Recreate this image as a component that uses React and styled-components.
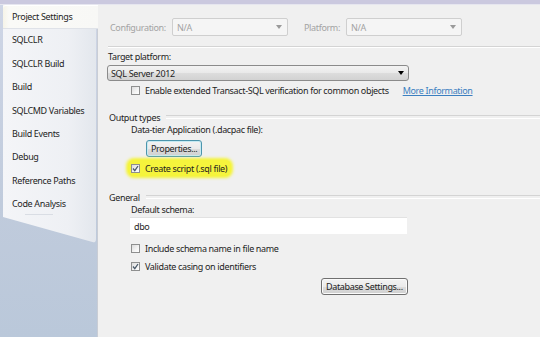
import React from "react";
import styled, { createGlobalStyle } from "styled-components";

const Global = createGlobalStyle`
  html, body { margin: 0; padding: 0; background: #f0f0f0; }
  body { font-family: "Noto Sans", "Open Sans", sans-serif; font-size: 9px; letter-spacing: -0.35px; color: #1e1e1e; }
  * { box-sizing: border-box; }
`;

const Window = styled.div`
  width: 540px;
  height: 337px;
  overflow: hidden;
  display: flex;
  flex-direction: column;
  background: #f0f0f0;
`;

const TopBar = styled.div`
  height: 5px;
  flex: none;
  background: #cbc9df;
  border-bottom: 1px solid #e6e6ef;
`;

const Body = styled.div`
  flex: 1;
  display: flex;
`;

const Sidebar = styled.div`
  width: 98px;
  flex: none;
  padding-left: 3px;
  background: linear-gradient(to bottom, #cfd6e6 0%, #c0cbdc 60%, #bac8da 100%);
`;

const Panel = styled.div`
  position: relative;
  width: 93px;
  height: 238px;
  display: flex;
  flex-direction: column;
  &::before {
    content: "";
    position: absolute;
    inset: 0;
    border-bottom-right-radius: 4px;
    background: linear-gradient(to right, #f4f5f8 0%, #eef0f4 70%, #e3e7ed 100%);
    clip-path: polygon(0 0, 100% 0, 100% 100%, 0 212px);
  }
`;

const Tab = styled.div`
  position: relative;
  z-index: 1;
  height: 23.4px;
  line-height: 23.4px;
  padding-left: 9px;
  white-space: nowrap;
  width: ${(p) => (p.$selected ? "95px" : "93px")};
  border-top-left-radius: ${(p) => (p.$selected ? "3px" : "0")};
  background: ${(p) =>
    p.$selected
      ? "linear-gradient(to right, #f6f4e8 0px, #fafaf7 6px, #f8f8f6 100%)"
      : "transparent"};
  box-shadow: ${(p) => (p.$selected ? "inset 0 1px 0 #ffffff, 0 1px 0 #dfe2e8" : "none")};
`;

const TabRule = styled.div`
  position: relative;
  z-index: 1;
  margin: -2px 0 0 22px;
  width: 28px;
  height: 1px;
  background: #d9dde4;
`;

const Content = styled.div`
  position: relative;
  flex: 1;
  padding: 13px 0 0 10px;
  display: flex;
  flex-direction: column;
  &::before {
    content: "";
    position: absolute;
    left: -1px;
    top: 23px;
    bottom: 0;
    width: 1px;
    background: #c9cdd5;
  }
`;

const TopRow = styled.div`
  display: flex;
  align-items: center;
  height: 18px;
  padding-left: 2px;
`;

const Muted = styled.span`
  color: #a3a3a3;
  width: ${(p) => p.$w}px;
  flex: none;
`;

const Disabled = styled.div`
  width: 116px;
  height: 18px;
  flex: none;
  border: 1px solid #cfcfcf;
  border-radius: 2px;
  background: #f5f5f5;
  color: #a3a3a3;
  display: flex;
  align-items: center;
  justify-content: space-between;
  padding: 0 5px 0 4px;
  margin-right: ${(p) => p.$mr || 0}px;
`;

const Separator = styled.div`
  margin-top: 10px;
  height: 2px;
  border-top: 1px solid #d4d4d4;
  border-bottom: 1px solid #ffffff;
`;

const Label = styled.div`
  height: 12px;
  line-height: 12px;
  margin-top: ${(p) => p.$mt || 0}px;
  margin-left: ${(p) => p.$ml || 0}px;
  white-space: nowrap;
`;

const Select = styled.div`
  margin: 2px 0 0 -1px;
  width: 302px;
  height: 16px;
  border: 1px solid #8b8b8b;
  border-radius: 3px;
  background: linear-gradient(to bottom, #f3f3f3 0%, #e9e9e9 50%, #dddddd 51%, #d2d2d2 100%);
  display: flex;
  align-items: center;
  justify-content: space-between;
  padding: 0 4px 0 3px;
`;

const Row = styled.div`
  display: flex;
  align-items: center;
  height: 12px;
  margin-top: ${(p) => p.$mt || 0}px;
  margin-left: ${(p) => p.$ml ?? 23}px;
  white-space: nowrap;
`;

const Box = styled.span`
  width: 9px;
  height: 9px;
  flex: none;
  margin-right: 5px;
  border: 1px solid #8e8f8f;
  background: linear-gradient(135deg, #dcdcdc 0%, #f4f4f4 60%, #ffffff 100%);
  display: flex;
  align-items: center;
  justify-content: center;
`;

const Link = styled.span`
  margin-left: 14px;
  color: #3b7fc0;
  text-decoration: underline;
`;

const Highlight = styled.div`
  align-self: flex-start;
  margin: 3px 0 0 20px;
  padding: 2px 4px 2px 3px;
  background: #f5f43c;
  border-radius: 6px;
  box-shadow: 0 0 3px 2px #f5f43c;
`;

const GroupHead = styled.div`
  display: flex;
  align-items: center;
  height: 12px;
  margin-top: ${(p) => p.$mt}px;
  margin-left: 1px;
  &::after {
    content: "";
    flex: 1;
    margin-left: 6px;
    height: 2px;
    border-top: 1px solid #d4d4d4;
    border-bottom: 1px solid #ffffff;
  }
`;

const Button = styled.div`
  align-self: flex-start;
  margin-top: ${(p) => p.$mt}px;
  margin-left: ${(p) => p.$ml}px;
  height: 17px;
  padding: 0 ${(p) => p.$px}px;
  border: 1px solid ${(p) => (p.$focus ? "#4c95ad" : "#707070")};
  border-radius: 3px;
  background: linear-gradient(to bottom, #f3f3f3 0%, #ebebeb 50%, #dddddd 51%, #d0d0d0 100%);
  box-shadow: inset 0 0 0 1px ${(p) => (p.$focus ? "#c6eaf2" : "#fbfbfb")};
  display: flex;
  align-items: center;
  white-space: nowrap;
`;

const Input = styled.div`
  margin: 1px 0 0 22px;
  width: 277px;
  height: 17px;
  background: #ffffff;
  border-top: 1px solid #e2e2e2;
  display: flex;
  align-items: center;
  padding-left: 4px;
`;

const Arrow = ({ color }) => (
  <svg width="6" height="4" viewBox="0 0 6 4">
    <path d="M0 0H6L3 4Z" fill={color} />
  </svg>
);

const Check = ({ checked }) => (
  <Box>
    {checked && (
      <svg width="7" height="7" viewBox="0 0 7 7">
        <path d="M1 3.5L2.8 5.6L6 1" fill="none" stroke="#4a5a6a" strokeWidth="1.3" />
      </svg>
    )}
  </Box>
);

const tabs = [
  "Project Settings",
  "SQLCLR",
  "SQLCLR Build",
  "Build",
  "SQLCMD Variables",
  "Build Events",
  "Debug",
  "Reference Paths",
  "Code Analysis",
];

export default function App() {
  return (
    <Window>
      <Global />
      <TopBar />
      <Body>
        <Sidebar>
          <Panel>
            {tabs.map((t, i) => (
              <Tab key={t} $selected={i === 0}>
                {t}
              </Tab>
            ))}
            <TabRule />
          </Panel>
        </Sidebar>
        <Content>
          <TopRow>
            <Muted $w={62}>Configuration:</Muted>
            <Disabled $mr={16}>
              N/A <Arrow color="#9a9a9a" />
            </Disabled>
            <Muted $w={42}>Platform:</Muted>
            <Disabled>
              N/A <Arrow color="#9a9a9a" />
            </Disabled>
          </TopRow>
          <Separator />
          <Label $mt={3}>Target platform:</Label>
          <Select>
            SQL Server 2012 <Arrow color="#000" />
          </Select>
          <Row $mt={3}>
            <Check />
            Enable extended Transact-SQL verification for common objects
            <Link>More Information</Link>
          </Row>
          <GroupHead $mt={15}>Output types</GroupHead>
          <Label $mt={1} $ml={23}>Data-tier Application (.dacpac file):</Label>
          <Button $mt={4} $ml={38} $px={4} $focus>
            Properties...
          </Button>
          <Highlight>
            <Row $ml={0}>
              <Check checked />
              Create script (.sql file)
            </Row>
          </Highlight>
          <GroupHead $mt={15}>General</GroupHead>
          <Label $mt={1} $ml={23}>Default schema:</Label>
          <Input>dbo</Input>
          <Row $mt={8}>
            <Check />
            Include schema name in file name
          </Row>
          <Row $mt={6}>
            <Check checked />
            Validate casing on identifiers
          </Row>
          <Button $mt={6} $ml={213} $px={4}>
            Database Settings...
          </Button>
        </Content>
      </Body>
    </Window>
  );
}
